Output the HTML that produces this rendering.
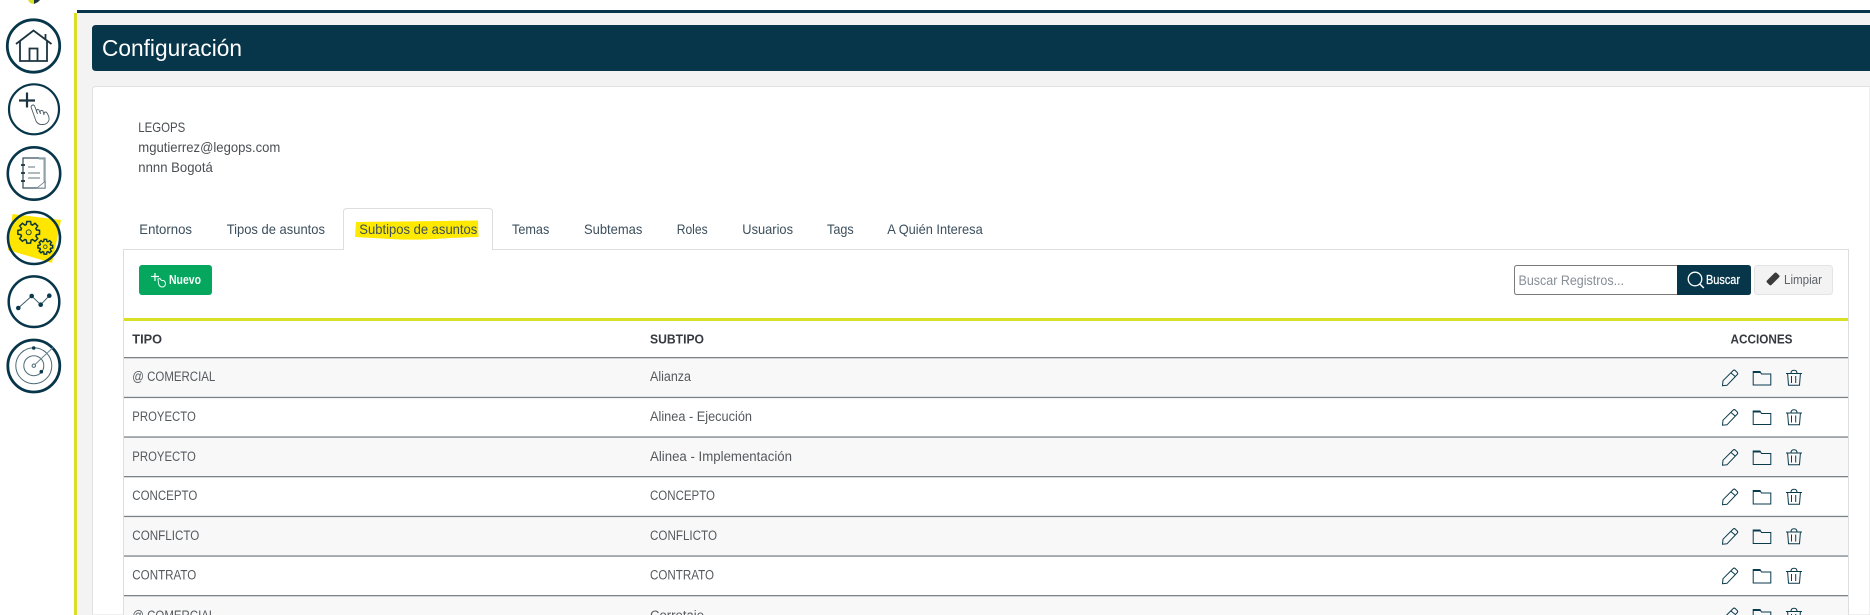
<!DOCTYPE html>
<html lang="es">
<head>
<meta charset="utf-8">
<title>Configuración</title>
<style>
html,body{margin:0;padding:0;width:1870px;height:615px;overflow:hidden;background:#fff}
svg{display:block}
text{font-family:"Liberation Sans",sans-serif}
.t{font-size:14px;fill:#4a4f55}
.tab{font-size:14px;fill:#3c4f5c}
.r{font-size:13.5px;fill:#54595e}
.h{font-size:13px;font-weight:bold;fill:#363a40}
.sep{fill:#7b8389}
.ic{fill:none;stroke:#0a3a4d;stroke-width:1}
.c{fill:none;stroke:#07364a}
.k{fill:none;stroke:#1c3340}
</style>
</head>
<body>
<svg width="1870" height="615" viewBox="0 0 1870 615" xmlns="http://www.w3.org/2000/svg">
<defs>
<g id="acts">
  <path class="ic" d="M1722.500 385.700l.5-5 10.200-10.200q1-.9 2 0l2 2q1 1 .1 2l-10.300 10.800zM1730.700 372.700l4.800 4"/>
  <path class="ic" d="M1753.200 371.500h6.800l1.500 2.500h9.300v11h-17.600z"/>
  <path d="M1753 371h7l1 2h-8z" fill="#0a3a4d"/>
  <path class="ic" d="M1786 373.500h16M1791 373.500q0-3.200 3-3.200q3 0 3 3.200M1787.600 373.500l.9 11.800h11l.9-11.800M1791.500 376v7M1795.700 376v7"/>
</g>
<polygon id="gear" points="70.800,-21.600 98.500,-17.400 98.500,17.400 70.800,21.600 65.300,34.700 81.900,57.400 57.400,81.900 34.700,65.300 21.600,70.800 17.400,98.500 -17.400,98.500 -21.600,70.800 -34.700,65.300 -57.400,81.900 -81.900,57.400 -65.300,34.700 -70.800,21.600 -98.500,17.400 -98.500,-17.400 -70.800,-21.600 -65.300,-34.700 -81.900,-57.400 -57.400,-81.900 -34.700,-65.300 -21.600,-70.800 -17.400,-98.500 17.400,-98.500 21.600,-70.800 34.700,-65.300 57.400,-81.900 81.900,-57.400 65.300,-34.700" fill="none" stroke="#0f3a3a" stroke-width="1.500" vector-effect="non-scaling-stroke"/>
</defs>

<!-- page backgrounds -->
<rect width="1870" height="615" fill="#fff"/>
<rect x="77" y="13" width="1793" height="602" fill="#f3f3f3"/>
<rect x="77" y="10" width="1793" height="3" fill="#07364a"/>
<rect x="74" y="13" width="3" height="602" fill="#d9df24"/>
<path d="M28 0h12l-2 2-4 2-4-1z" fill="#d9df24"/>
<path d="M34 0h6l-2 2-4 2z" fill="#1c3340"/>

<!-- sidebar: home -->
<circle class="c" cx="33.500" cy="46" r="26.200" stroke-width="2.800"/>
<path class="k" stroke-width="1.800" d="M16 44l17.500-13.500L51.500 44M20 41v20h27V41M45.500 34v6M29.500 61V48.500h8V61"/>
<!-- sidebar: new -->
<circle class="c" cx="34" cy="109.300" r="25" stroke-width="2.200"/>
<path d="M19 100.500h16M27 92.500v15" stroke="#1c3340" stroke-width="2.200" fill="none"/>
<path d="M31 107Q31.500 105 33 105Q34.500 105 35 107L37.500 114L36.500 110.500Q37.500 108.500 39 110L40.500 114L40 111.500Q41.500 109.500 43 111L44 115L44 113Q45.500 111 47 113Q49.500 117 49 120Q47.500 124.500 43 124.500Q38 125 36 121Z" fill="#fff" stroke="#4a5a60" stroke-width=".9"/>
<!-- sidebar: notebook -->
<circle class="c" cx="34" cy="173.500" r="26.200" stroke-width="2.600"/>
<rect x="23" y="158" width="22" height="30" fill="none" stroke="#2d4a58" stroke-width="1.200"/>
<path d="M39 158.500h5.500v23" fill="none" stroke="#8ba0a8" stroke-width="2"/>
<path d="M21 165h4M21 173h4M21 181h4" stroke="#1c3340" stroke-width="1.800"/>
<path d="M28 167h7M28 173h12M28 178h12" stroke="#5f757f" stroke-width="1.100"/>
<path d="M37 188l8-6.500v6.500z" fill="#fff" stroke="#60767f" stroke-width=".8"/>
<!-- sidebar: config -->
<path d="M12.500 214l48.500 6-3 15-6 28-44-13z" fill="#ffe600"/>
<circle class="c" cx="34" cy="238" r="26" stroke-width="2.600"/>
<use href="#gear" transform="translate(28.700 232.300) scale(.11)"/>
<circle cx="28.700" cy="232.300" r="2.500" fill="none" stroke="#0f3a3a" stroke-width=".9"/>
<use href="#gear" transform="translate(45.300 246.700) scale(.075)"/>
<circle cx="45.300" cy="246.700" r="1.800" fill="none" stroke="#0f3a3a" stroke-width=".8"/>
<!-- sidebar: chart -->
<circle class="c" cx="34" cy="301.700" r="25.300" stroke-width="2.500"/>
<path d="M18.300 308L31.700 296L40.700 304.700L49.300 295.700" fill="none" stroke="#3a5a68" stroke-width="1"/>
<circle cx="18.300" cy="308" r="2.300" fill="#0c3a4d"/><circle cx="31.700" cy="296" r="2.300" fill="#0c3a4d"/><circle cx="40.700" cy="304.700" r="2.300" fill="#0c3a4d"/><circle cx="49.300" cy="295.700" r="2.300" fill="#0c3a4d"/>
<!-- sidebar: radar -->
<circle class="c" cx="33.800" cy="366" r="26" stroke-width="2.800"/>
<circle cx="33.800" cy="365.700" r="18" fill="none" stroke="#4c6a77" stroke-width="1"/>
<circle cx="33.800" cy="365.700" r="10" fill="none" stroke="#4c6a77" stroke-width="1"/>
<circle cx="33.800" cy="365.700" r="1.700" fill="none" stroke="#4c6a77" stroke-width="1"/>
<path d="M34.500 365L53 347.500" stroke="#6d8691" stroke-width="1"/>
<circle cx="33.700" cy="348" r="1.800" fill="#0c3a4d"/><circle cx="41.300" cy="371.700" r="1.800" fill="#0c3a4d"/>

<!-- header bar -->
<path d="M96 25H1870V71H96q-4 0-4-4V29q0-4 4-4z" fill="#07364a"/>
<text x="102" y="56" font-size="23.500" fill="#fff" textLength="140" lengthAdjust="spacingAndGlyphs">Configuración</text>

<!-- card -->
<path d="M1870 86.500H96q-3.500 0-3.500 3.500V615H1870z" fill="#fff" stroke="#e2e2e2" stroke-width="1"/>
<text class="t" x="138.300" y="132" textLength="47" lengthAdjust="spacingAndGlyphs">LEGOPS</text>
<text class="t" x="138.300" y="152" textLength="142" lengthAdjust="spacingAndGlyphs">mgutierrez@legops.com</text>
<text class="t" x="138.300" y="172" textLength="74.500" lengthAdjust="spacingAndGlyphs">nnnn Bogotá</text>

<!-- panel + tabs -->
<path d="M123.500 615V249.500H1848.500V615" fill="#fff" stroke="#dedede" stroke-width="1"/>
<path d="M343.500 250V212q0-3.500 3.500-3.500H489q3.500 0 3.500 3.500V249.500" fill="#fff" stroke="#dedede" stroke-width="1"/>
<rect x="344" y="248" width="148" height="3" fill="#fff"/>
<path d="M356 222l122-1.500.500 16.500q-20 .500-36 1.500q-30 2-52 .500L355 237z" fill="#ffe900"/>
<text class="tab" x="139.300" y="234" textLength="52.700" lengthAdjust="spacingAndGlyphs">Entornos</text>
<text class="tab" x="226.700" y="234" textLength="98.300" lengthAdjust="spacingAndGlyphs">Tipos de asuntos</text>
<text class="tab" x="359.300" y="234" textLength="118" lengthAdjust="spacingAndGlyphs">Subtipos de asuntos</text>
<text class="tab" x="512" y="234" textLength="37.300" lengthAdjust="spacingAndGlyphs">Temas</text>
<text class="tab" x="584" y="234" textLength="58.300" lengthAdjust="spacingAndGlyphs">Subtemas</text>
<text class="tab" x="676.700" y="234" textLength="31" lengthAdjust="spacingAndGlyphs">Roles</text>
<text class="tab" x="742.300" y="234" textLength="50.700" lengthAdjust="spacingAndGlyphs">Usuarios</text>
<text class="tab" x="827" y="234" textLength="26.700" lengthAdjust="spacingAndGlyphs">Tags</text>
<text class="tab" x="887.300" y="234" textLength="95.400" lengthAdjust="spacingAndGlyphs">A Quién Interesa</text>

<!-- Nuevo -->
<rect x="139" y="265" width="73" height="30" rx="3" fill="#05a75f"/>
<path d="M151 276.500h8M155 273v8" stroke="#fff" stroke-width="1.200" fill="none"/>
<path d="M158 279l2-.500 1.500 2h2q2 1 2 3.500q-.500 3-3.500 3q-3-.500-3.500-3.500z" fill="none" stroke="#e8fff2" stroke-width="1"/>
<text x="169" y="284" font-size="12.500" font-weight="bold" fill="#f4fff8" textLength="32" lengthAdjust="spacingAndGlyphs">Nuevo</text>

<!-- search -->
<path d="M1678 265.500h-161q-2.500 0-2.500 2.500v24q0 2.500 2.500 2.500h161z" fill="#fff" stroke="#7a7a7a" stroke-width="1"/>
<text x="1518.500" y="285" font-size="14" fill="#868e96" textLength="105.500" lengthAdjust="spacingAndGlyphs">Buscar Registros...</text>
<path d="M1677 265h71q3 0 3 3v24q0 3-3 3h-71z" fill="#07364a"/>
<circle cx="1695" cy="279" r="6.800" fill="none" stroke="#fff" stroke-width="1.300"/>
<path d="M1699.800 284l4 4" stroke="#fff" stroke-width="1.500"/>
<text x="1706" y="284" font-size="12.500" fill="#fff" stroke="#fff" stroke-width=".25" textLength="34" lengthAdjust="spacingAndGlyphs">Buscar</text>
<rect x="1754.500" y="265.500" width="78" height="29" rx="3" fill="#f3f3f3" stroke="#e4e4e4"/>
<path d="M1767 280.500l7.500-7.500q1-1 2-.2l2.700 2.600q.8 1-.2 2l-7.500 7.500q-1 .8-2 .1l-2.500-2.500q-1-1-.000-2z" fill="#3a3a3a"/>
<text x="1784" y="284" font-size="12.500" fill="#5c6268" textLength="38" lengthAdjust="spacingAndGlyphs">Limpiar</text>

<!-- table -->
<rect x="124" y="318" width="1724" height="3" fill="#d9df24"/>
<text class="h" x="132.300" y="343.700" textLength="29.700" lengthAdjust="spacingAndGlyphs">TIPO</text>
<text class="h" x="650" y="343.700" textLength="54" lengthAdjust="spacingAndGlyphs">SUBTIPO</text>
<text class="h" x="1730.500" y="343.700" textLength="62" lengthAdjust="spacingAndGlyphs">ACCIONES</text>

<rect x="124" y="358" width="1724" height="39" fill="#f8f8f8"/>
<rect x="124" y="437" width="1724" height="39" fill="#f8f8f8"/>
<rect x="124" y="517" width="1724" height="39" fill="#f8f8f8"/>
<rect x="124" y="596" width="1724" height="19" fill="#f8f8f8"/>
<rect class="sep" x="124" y="357" width="1724" height="1.300"/>
<rect class="sep" x="124" y="396.800" width="1724" height="1.300"/>
<rect class="sep" x="124" y="436.400" width="1724" height="1.300"/>
<rect class="sep" x="124" y="476" width="1724" height="1.300"/>
<rect class="sep" x="124" y="515.800" width="1724" height="1.300"/>
<rect class="sep" x="124" y="555.400" width="1724" height="1.300"/>
<rect class="sep" x="124" y="595" width="1724" height="1.300"/>

<text class="r" x="132.300" y="381" textLength="83" lengthAdjust="spacingAndGlyphs">@ COMERCIAL</text>
<text class="r" x="650" y="381" textLength="41" lengthAdjust="spacingAndGlyphs">Alianza</text>
<text class="r" x="132.300" y="421" textLength="63.500" lengthAdjust="spacingAndGlyphs">PROYECTO</text>
<text class="r" x="650" y="421" textLength="102" lengthAdjust="spacingAndGlyphs">Alinea - Ejecución</text>
<text class="r" x="132.300" y="461" textLength="63.500" lengthAdjust="spacingAndGlyphs">PROYECTO</text>
<text class="r" x="650" y="461" textLength="142" lengthAdjust="spacingAndGlyphs">Alinea - Implementación</text>
<text class="r" x="132.300" y="500" textLength="65" lengthAdjust="spacingAndGlyphs">CONCEPTO</text>
<text class="r" x="650" y="500" textLength="65" lengthAdjust="spacingAndGlyphs">CONCEPTO</text>
<text class="r" x="132.300" y="540" textLength="67" lengthAdjust="spacingAndGlyphs">CONFLICTO</text>
<text class="r" x="650" y="540" textLength="67" lengthAdjust="spacingAndGlyphs">CONFLICTO</text>
<text class="r" x="132.300" y="579.500" textLength="64" lengthAdjust="spacingAndGlyphs">CONTRATO</text>
<text class="r" x="650" y="579.500" textLength="64" lengthAdjust="spacingAndGlyphs">CONTRATO</text>
<text class="r" x="132.300" y="620" textLength="83" lengthAdjust="spacingAndGlyphs">@ COMERCIAL</text>
<text class="r" x="650" y="620" textLength="54" lengthAdjust="spacingAndGlyphs">Corretaje</text>

<use href="#acts"/>
<use href="#acts" y="39.500"/>
<use href="#acts" y="79.500"/>
<use href="#acts" y="119"/>
<use href="#acts" y="158.500"/>
<use href="#acts" y="198"/>
<use href="#acts" y="238"/>
</svg>
</body>
</html>
